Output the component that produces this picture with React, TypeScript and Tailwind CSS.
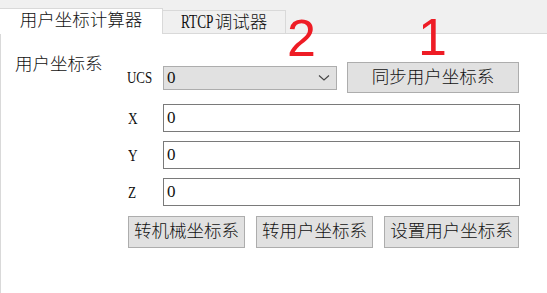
import type { ReactNode } from "react";

const cjk = "font-['Liberation_Serif','Noto_Sans_CJK_SC',serif]";

// Latin in the original is half-width (SimSun-like), so squeeze it horizontally
function Narrow({ children, w, scale = "scale-x-[0.72]" }: { children: ReactNode; w: string; scale?: string }) {
  return (
    <span className={`inline-block overflow-visible whitespace-nowrap align-baseline ${w}`}>
      <span className={`inline-block origin-left ${scale}`}>{children}</span>
    </span>
  );
}

function Field({ label }: { label: string }) {
  return (
    <div className="flex h-[28px] items-center">
      <div className="w-[36px] pl-px text-[17.5px]">
        <Narrow w="w-[10px]" scale="scale-x-[0.76]">{label}</Narrow>
      </div>
      <div className="flex h-[28px] w-[357px] items-center border border-[#7a7a7a] bg-white pl-[3px] text-[17px]">
        0
      </div>
    </div>
  );
}

function Btn({ children, w, h = "h-[32px]" }: { children: ReactNode; w: string; h?: string }) {
  return (
    <button
      className={`flex items-center justify-center border border-[#adadad] bg-[#e1e1e1] text-[17.5px] leading-none text-[#111] ${w} ${h}`}
    >
      {children}
    </button>
  );
}

export default function App() {
  return (
    <div className={`relative h-[293px] w-[547px] overflow-hidden bg-white font-light text-[#111] ${cjk}`}>
      {/* tab strip */}
      <div className="flex h-[34px] items-end border-b border-[#d9d9d9] bg-[#f0f0f0]">
        <div className="-mb-px flex h-[26px] w-[163px] items-center justify-center border border-b-0 border-l-0 border-[#d9d9d9] bg-white pb-[2px] text-[17.5px]">
          用户坐标计算器
        </div>
        <div className="flex h-[23px] w-[123px] items-center justify-center border border-b-0 border-l-0 border-[#d9d9d9] bg-[#f0f0f0] text-[17.5px]">
          <Narrow w="w-[34px]" scale="scale-x-[0.7]">
            <span className="text-[19px]">RTCP</span>
          </Narrow>
          调试器
        </div>
      </div>

      {/* content */}
      <div className="flex h-[259px] border-l border-[#d9d9d9] pt-[18px]">
        <div className="w-[126px] pl-[14px] text-[17.5px] leading-[24px]">用户坐标系</div>

        <div className="mt-[10px] flex flex-col">
          <div className="flex h-[31px] items-center">
            <div className="w-[36px] text-[17.5px]">
              <Narrow w="w-[26px]" scale="scale-x-[0.74]">UCS</Narrow>
            </div>
            <div className="flex h-[24px] w-[174px] items-center justify-between border border-[#adadad] bg-[#e1e1e1] pl-[3px] pr-[6px] text-[17px]">
              <span>0</span>
              <svg width="12" height="8" viewBox="0 0 12 8" className="text-[#444]">
                <path d="M1 1.5 L6 6 L11 1.5" fill="none" stroke="currentColor" strokeWidth="1.1" />
              </svg>
            </div>
            <div className="ml-[10px]">
              <Btn w="w-[172px]" h="h-[31px]">同步用户坐标系</Btn>
            </div>
          </div>

          <div className="mt-[11px] flex flex-col gap-[9px]">
            <Field label="X" />
            <Field label="Y" />
            <Field label="Z" />
          </div>

          <div className="ml-px mt-[10px] flex gap-[11px]">
            <Btn w="w-[117px]">转机械坐标系</Btn>
            <Btn w="w-[117px]">转用户坐标系</Btn>
            <Btn w="w-[135px]">设置用户坐标系</Btn>
          </div>
        </div>
      </div>

      {/* red hand annotations */}
      <span className="absolute left-[287px] top-[12px] font-['Liberation_Sans',sans-serif] text-[52px] font-normal leading-none text-[#ee1c25]">
        2
      </span>
      <span className="absolute left-[418px] top-[11px] font-['Liberation_Sans',sans-serif] text-[52px] font-normal leading-none text-[#ee1c25]">
        1
      </span>
    </div>
  );
}
